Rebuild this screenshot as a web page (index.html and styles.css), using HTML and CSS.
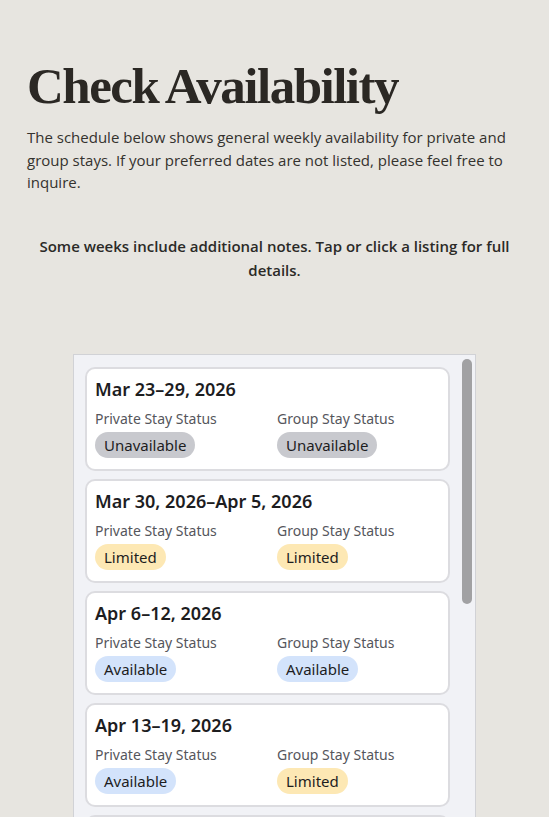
FILE: index.html
```html
<!DOCTYPE html>
<html>
  <head>
    <meta charset="UTF-8">
    <meta name="viewport" content="width=device-width, initial-scale=1.0">
    <title>Check Availability</title>
    <link rel="stylesheet" href="styles.css">
  </head>
  <body>
    <div class="page">
      <h1>Check Availability</h1>
      <p class="intro">
        The schedule below shows general weekly availability for private and
        group stays. If your preferred dates are not listed, please feel free to
        inquire.
      </p>

      <p class="note">
        Some weeks include additional notes. Tap or click a listing for full details.
      </p>

      <div class="list-frame">
        <div class="week-list">
          <div class="week-card">
            <h3>Mar 23–29, 2026</h3>
            <div class="status-row">
              <div class="status-col">
                <span class="status-label">Private Stay Status</span>
                <span class="badge unavailable">Unavailable</span>
              </div>
              <div class="status-col">
                <span class="status-label">Group Stay Status</span>
                <span class="badge unavailable">Unavailable</span>
              </div>
            </div>
          </div>

          <div class="week-card">
            <h3>Mar 30, 2026–Apr 5, 2026</h3>
            <div class="status-row">
              <div class="status-col">
                <span class="status-label">Private Stay Status</span>
                <span class="badge limited">Limited</span>
              </div>
              <div class="status-col">
                <span class="status-label">Group Stay Status</span>
                <span class="badge limited">Limited</span>
              </div>
            </div>
          </div>

          <div class="week-card">
            <h3>Apr 6–12, 2026</h3>
            <div class="status-row">
              <div class="status-col">
                <span class="status-label">Private Stay Status</span>
                <span class="badge available">Available</span>
              </div>
              <div class="status-col">
                <span class="status-label">Group Stay Status</span>
                <span class="badge available">Available</span>
              </div>
            </div>
          </div>

          <div class="week-card">
            <h3>Apr 13–19, 2026</h3>
            <div class="status-row">
              <div class="status-col">
                <span class="status-label">Private Stay Status</span>
                <span class="badge available">Available</span>
              </div>
              <div class="status-col">
                <span class="status-label">Group Stay Status</span>
                <span class="badge limited">Limited</span>
              </div>
            </div>
          </div>

          <div class="week-card">
            <h3>Apr 20–26, 2026</h3>
            <div class="status-row">
              <div class="status-col">
                <span class="status-label">Private Stay Status</span>
                <span class="badge available">Available</span>
              </div>
              <div class="status-col">
                <span class="status-label">Group Stay Status</span>
                <span class="badge available">Available</span>
              </div>
            </div>
          </div>

          <div class="week-card">
            <h3>Apr 27, 2026–May 3, 2026</h3>
            <div class="status-row">
              <div class="status-col">
                <span class="status-label">Private Stay Status</span>
                <span class="badge limited">Limited</span>
              </div>
              <div class="status-col">
                <span class="status-label">Group Stay Status</span>
                <span class="badge available">Available</span>
              </div>
            </div>
          </div>

          <div class="week-card">
            <h3>May 4–10, 2026</h3>
            <div class="status-row">
              <div class="status-col">
                <span class="status-label">Private Stay Status</span>
                <span class="badge available">Available</span>
              </div>
              <div class="status-col">
                <span class="status-label">Group Stay Status</span>
                <span class="badge unavailable">Unavailable</span>
              </div>
            </div>
          </div>

          <div class="week-card">
            <h3>May 11–17, 2026</h3>
            <div class="status-row">
              <div class="status-col">
                <span class="status-label">Private Stay Status</span>
                <span class="badge available">Available</span>
              </div>
              <div class="status-col">
                <span class="status-label">Group Stay Status</span>
                <span class="badge available">Available</span>
              </div>
            </div>
          </div>
        </div>
        <div class="scroll-thumb"></div>
      </div>
    </div>
  </body>
</html>
```

FILE: styles.css
```css
* {
  margin: 0;
  padding: 0;
  box-sizing: border-box;
}

body {
  font-family: 'Open Sans', 'Noto Sans', sans-serif;
  background: #e7e5e0;
  color: #2b2a27;
}

.page {
  padding: 58px 27px 0;
}

h1 {
  font-family: 'Liberation Serif', 'Times New Roman', serif;
  font-size: 51px;
  font-weight: 700;
  line-height: 57px;
  letter-spacing: -1.5px;
  word-spacing: -2px;
  color: #2b2824;
  margin-bottom: 11px;
}

.intro {
  font-size: 15px;
  line-height: 22.5px;
  color: #34322e;
}

.note {
  margin-top: 40px;
  text-align: center;
  font-size: 15px;
  font-weight: 600;
  line-height: 24px;
  color: #2b2a27;
}

.list-frame {
  position: relative;
  width: 403px;
  margin: 72px auto 0;
  border: 1px solid #d1d2d6;
  background: #f1f2f6;
}

.week-list {
  height: 480px;
  padding: 12px 0 12px 11px;
  overflow-y: auto;
  scrollbar-width: none;
  display: flex;
  flex-direction: column;
  gap: 8px;
  font-family: 'Noto Sans', 'Open Sans', sans-serif;
}

.week-list::-webkit-scrollbar {
  display: none;
}

/* drawn thumb, the headless browser hides native scrollbars */
.scroll-thumb {
  position: absolute;
  top: 4px;
  right: 3px;
  width: 10px;
  height: 245px;
  border-radius: 5px;
  background: #a1a1a3;
}

.week-card {
  flex-shrink: 0;
  width: 365px;
  background: #fff;
  border: 2px solid #dcdce0;
  border-radius: 10px;
  padding: 8px 8px 11px;
}

.week-card h3 {
  font-size: 18px;
  font-weight: 600;
  line-height: 25px;
  color: #1d1d1f;
  margin-bottom: 7px;
}

.status-row {
  display: grid;
  grid-template-columns: 1fr 1fr;
  column-gap: 19px;
}

.status-col {
  display: flex;
  flex-direction: column;
  align-items: flex-start;
}

.status-label {
  font-size: 14px;
  line-height: 19px;
  color: #55565c;
  margin-bottom: 4px;
}

.badge {
  display: inline-block;
  font-size: 15px;
  line-height: 20px;
  padding: 3px 9px;
  border-radius: 14px;
  color: #1d1d1f;
}

.badge.unavailable {
  background: #c8c9ce;
}

.badge.limited {
  background: #fde8b4;
}

.badge.available {
  background: #d3e3fb;
}
```
